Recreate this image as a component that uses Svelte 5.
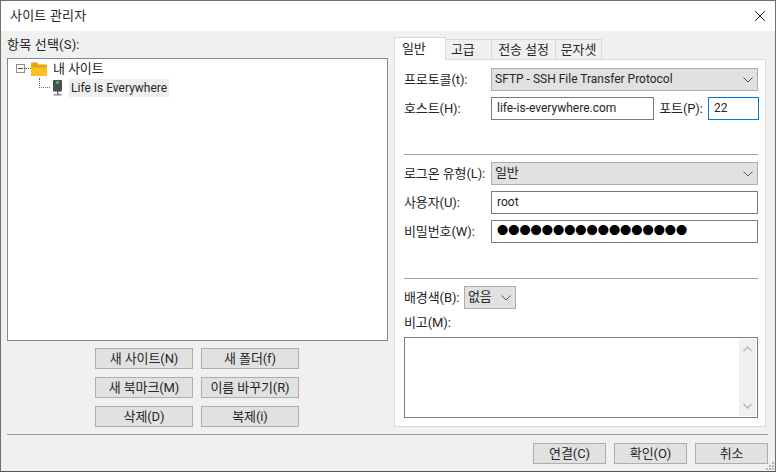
<script>
  const leftButtons = ['새 사이트(N)', '새 폴더(f)', '새 북마크(M)', '이름 바꾸기(R)', '삭제(D)', '복제(i)'];
  const footerButtons = ['연결(C)', '확인(O)', '취소'];
  const tabs = ['일반', '고급', '전송 설정', '문자셋'];
  const dots = '●'.repeat(17);
</script>

<div class="win">
  <header class="title">
    <span>사이트 관리자</span>
    <svg class="close" width="12" height="12" viewBox="0 0 12 12"><path d="M1 1l10 10M11 1L1 11" stroke="#222" stroke-width="1" fill="none"/></svg>
  </header>

  <div class="body">
    <div class="main">
      <section class="left">
        <div class="select-label">항목 선택(S):</div>
        <div class="tree">
          <div class="tree-row">
            <span class="expander"></span>
            <span class="dash"></span>
            <svg class="folder" width="16" height="14" viewBox="0 0 16 14">
              <path d="M0 1.5Q0 .5 1 .5H6L8 2.5H15Q16 2.5 16 3.5V13Q16 14 15 14H1Q0 14 0 13Z" fill="#e5a50f"/>
              <path d="M0 5.5H16V13Q16 14 15 14H1Q0 14 0 13Z" fill="#fdc01f"/>
            </svg>
            <span class="tree-text">내 사이트</span>
          </div>
          <div class="tree-row child">
            <span class="elbow"></span>
            <svg class="server" width="9" height="16" viewBox="0 0 9 16">
              <rect x="0" y="0" width="9" height="11.5" rx="1" fill="#4d4d4d"/>
              <rect x="3" y="1" width="3" height="3" fill="#3fb24a"/>
              <rect x="4" y="11" width="1.5" height="3" fill="#666"/>
              <rect x="0.5" y="14" width="8" height="1.5" fill="#8d8d8d"/>
            </svg>
            <span class="tree-text selected latin">Life Is Everywhere</span>
          </div>
        </div>
        <div class="left-buttons">
          {#each leftButtons as b}
            <button class="btn">{b}</button>
          {/each}
        </div>
      </section>

      <section class="right">
        <div class="tabs">
          {#each tabs as t, i}
            <div class="tab" class:active={i === 0}>{t}</div>
          {/each}
        </div>
        <div class="panel">
          <div class="row first">
            <span class="lbl">프로토콜(t):</span>
            <div class="combo grow latin">SFTP - SSH File Transfer Protocol
              <svg class="chev" width="10" height="6" viewBox="0 0 10 6"><path d="M.5.5L5 5 9.5.5" stroke="#555" fill="none"/></svg>
            </div>
          </div>
          <div class="row host">
            <span class="lbl">호스트(H):</span>
            <div class="field hostfield latin">life-is-everywhere.com</div>
            <span class="portlbl">포트(P):</span>
            <div class="field port latin">22</div>
          </div>
          <hr class="rule r1" />
          <div class="row login">
            <span class="lbl">로그온 유형(L):</span>
            <div class="combo grow">일반
              <svg class="chev" width="10" height="6" viewBox="0 0 10 6"><path d="M.5.5L5 5 9.5.5" stroke="#555" fill="none"/></svg>
            </div>
          </div>
          <div class="row user">
            <span class="lbl">사용자(U):</span>
            <div class="field grow latin">root</div>
          </div>
          <div class="row pw">
            <span class="lbl">비밀번호(W):</span>
            <div class="field grow dots">{dots}</div>
          </div>
          <hr class="rule r2" />
          <div class="row bgrow">
            <span class="bglbl">배경색(B):</span>
            <div class="combo bgsel">없음
              <svg class="chev" width="10" height="6" viewBox="0 0 10 6"><path d="M.5.5L5 5 9.5.5" stroke="#555" fill="none"/></svg>
            </div>
          </div>
          <div class="memo-label">비고(M):</div>
          <div class="memo">
            <div class="scroll">
              <svg width="9" height="6" viewBox="0 0 9 6"><path d="M.5 5L4.5 1 8.5 5" stroke="#b8b8b8" stroke-width="1.5" fill="none"/></svg>
              <svg width="9" height="6" viewBox="0 0 9 6"><path d="M.5 1L4.5 5 8.5 1" stroke="#b8b8b8" stroke-width="1.5" fill="none"/></svg>
            </div>
          </div>
        </div>
      </section>
    </div>

    <hr class="rule bottom" />
    <footer class="footer">
      {#each footerButtons as b}
        <button class="btn foot">{b}</button>
      {/each}
      <svg class="grip" width="10" height="10" viewBox="0 0 10 10" fill="#b5b5b5">
        <rect x="7" y="1" width="2" height="2"/><rect x="4" y="4" width="2" height="2"/><rect x="7" y="4" width="2" height="2"/><rect x="1" y="7" width="2" height="2"/><rect x="4" y="7" width="2" height="2"/><rect x="7" y="7" width="2" height="2"/>
      </svg>
    </footer>
  </div>
</div>

<style>
  :global(body) { margin: 0; }
  .win {
    width: 776px; height: 472px; box-sizing: border-box;
    border: 1px solid #6f6f6f; border-bottom-color: #555;
    display: flex; flex-direction: column;
    background: #f0f0f0; color: #262626;
    font: 13px/16px Roboto, "Noto Sans CJK KR", sans-serif;
    letter-spacing: -0.1px;
    overflow: hidden;
  }
  .latin { font-size: 12px; letter-spacing: 0; font-family: Roboto, "Noto Sans CJK KR", sans-serif; }
  .title {
    height: 30px; flex: none; background: #fff;
    display: flex; align-items: center; justify-content: space-between;
    padding: 0 9px 0 9px;
    letter-spacing: 0.2px;
  }
  .close { display: block; }
  .body { flex: 1; display: flex; flex-direction: column; position: relative; min-height: 0; }
  .main { display: flex; height: 397px; flex: none; }
  .left { width: 387px; padding: 6px 0 0 6px; box-sizing: border-box; flex: none; }
  .select-label { height: 21px; letter-spacing: 0.2px; }
  .tree {
    box-sizing: border-box; width: 381px; height: 283px;
    background: #fff; border: 1px solid #828790; padding: 0 0 0 8px;
  }
  .tree-row { display: flex; align-items: center; height: 19px; }
  .expander {
    width: 9px; height: 9px; box-sizing: border-box; border: 1px solid #8f8f8f;
    position: relative; flex: none; background: #fff;
  }
  .expander::after { content: ""; position: absolute; left: 1px; right: 1px; top: 3px; height: 1px; background: #444; }
  .dash { width: 6px; border-top: 1px dotted #666; flex: none; }
  .folder { margin-right: 3px; flex: none; }
  .tree-row.child { padding-left: 23px; }
  .elbow { width: 11px; height: 10px; margin-top: -9px; border-left: 1px dotted #666; border-bottom: 1px dotted #666; flex: none; box-sizing: border-box; margin-right: 3px; }
  .server { margin-right: 7px; flex: none; }
  .tree-text { padding: 0 3px; line-height: 18px; }
  .selected { background: #eeeeee; padding: 0 2px; }
  .left-buttons {
    display: grid; grid-template-columns: 98px 98px; gap: 8px; row-gap: 8px;
    margin-top: 7px; padding-left: 88px;
  }
  .btn {
    height: 21px; padding: 0; box-sizing: border-box; margin: 0;
    background: #e1e1e1; border: 1px solid #adadad; color: #262626;
    font: inherit; letter-spacing: inherit; line-height: 18px;
  }
  .right { flex: 1; padding: 6px 9px 0 6px; min-width: 0; }
  .tabs { display: flex; align-items: flex-end; height: 22px; position: relative; z-index: 1; }
  .tab {
    box-sizing: border-box; height: 20px; text-align: center; line-height: 19px;
    background: #f0f0f0; border: 1px solid #d9d9d9; border-bottom: none; margin-left: -1px;
    width: 47px;
  }
  .tab:nth-child(2) { text-align: left; padding-left: 5px; }
  .tab:nth-child(3) { width: 65px; }
  .tab.active {
    width: 52px; height: 23px; margin: 0 0 -1px 0; background: #fff; position: relative;
    text-align: left; padding-left: 7px; line-height: 21px;
  }
  .panel {
    box-sizing: border-box; height: 368px; background: #fff;
    border: 1px solid #d9d9d9; padding: 8px 7px 0 9px;
    display: flex; flex-direction: column;
  }
  .row { display: flex; align-items: center; height: 23px; flex: none; }
  .row.host { margin-top: 6px; }
  .lbl { width: 87px; flex: none; white-space: nowrap; }
  .grow { flex: 1; min-width: 0; }
  .combo {
    box-sizing: border-box; height: 23px; background: #e1e1e1; border: 1px solid #adadad;
    padding: 0 3px; line-height: 20px; position: relative; white-space: nowrap;
  }
  .chev { position: absolute; right: 4px; top: 8px; }
  .field {
    box-sizing: border-box; height: 23px; background: #fff; border: 1px solid #7a7a7a;
    padding: 0 5px; line-height: 20px; white-space: nowrap;
  }
  .hostfield { width: 163px; flex: none; }
  .portlbl { width: 54px; flex: none; text-align: center; }
  .port { width: 51px; flex: none; border-color: #0078d7; }
  .rule { border: 0; height: 1px; background: #a0a0a0; margin: 0; flex: none; }
  .r1 { margin-top: 34px; }
  .login { margin-top: 7px; }
  .user { margin-top: 6px; }
  .pw { margin-top: 6px; }
  .dots { font-size: 11.2px; letter-spacing: 0; color: #000; padding-left: 5px; }
  .r2 { margin-top: 35px; }
  .bgrow { margin-top: 7px; }
  .bglbl { width: 60px; flex: none; white-space: nowrap; }
  .bgsel { width: 52px; flex: none; }
  .memo-label { margin-top: 6px; height: 22px; line-height: 16px; }
  .memo {
    box-sizing: border-box; height: 81px; border: 1px solid #7a7a7a; background: #fff;
    display: flex; justify-content: flex-end; padding: 1px;
  }
  .scroll {
    width: 17px; background: #f0f0f0; display: flex; flex-direction: column;
    align-items: center; justify-content: space-between; padding: 7px 0; box-sizing: border-box;
  }
  .scroll svg { display: block; }
  .bottom { margin: 6px 7px 0 6px; }
  .footer { display: flex; justify-content: flex-end; gap: 8px; padding: 8px 7px 0 0; position: relative; flex: 1; }
  .foot { width: 73px; height: 21px; }
  .grip { position: absolute; right: 0; bottom: 0; }
</style>
